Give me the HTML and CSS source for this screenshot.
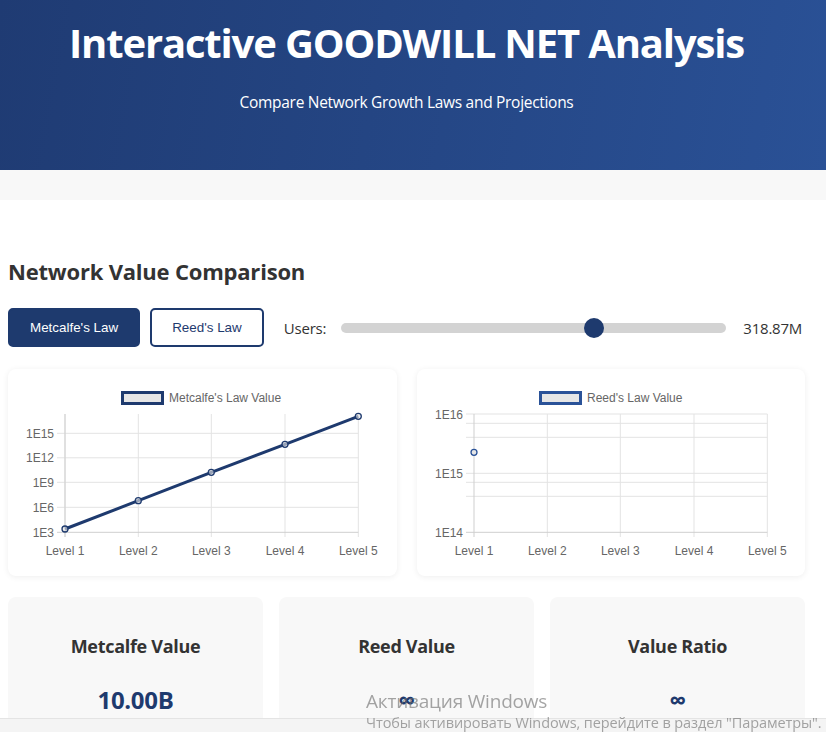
FILE: index.html
```html
<!DOCTYPE html>
<html lang="en">
<head>
<meta charset="utf-8">
<title>Interactive GOODWILL NET Analysis</title>
<link rel="stylesheet" href="styles.css">
</head>
<body>
<header class="hero">
  <div class="hero-inner">
    <h1 class="hero-title">Interactive GOODWILL NET Analysis</h1>
    <p class="hero-sub">Compare Network Growth Laws and Projections</p>
  </div>
</header>
<div class="strip"></div>
<main class="content">
  <h2 class="section-title">Network Value Comparison</h2>
  <div class="controls">
    <button class="btn btn-active">Metcalfe's Law</button>
    <button class="btn btn-outline">Reed's Law</button>
    <label class="users-label" for="users">Users:</label>
    <input class="slider" id="users" type="range" min="0" max="1000" value="666">
    <span class="users-value">318.87M</span>
  </div>

  <div class="charts">
    <div class="chart-card">
      <svg class="chart" width="389" height="207" viewBox="0 0 389 207">
        <rect x="114.5" y="23.5" width="40" height="11" fill="#e6e6e6" stroke="#1e3a6e" stroke-width="3"/>
        <text x="161" y="33" class="legend-text">Metcalfe's Law Value</text>
        <g stroke="#e3e3e3" stroke-width="1">
          <line x1="57" y1="45" x2="57" y2="168"/>
          <line x1="130.3" y1="45" x2="130.3" y2="168"/>
          <line x1="203.3" y1="45" x2="203.3" y2="168"/>
          <line x1="277" y1="45" x2="277" y2="168"/>
          <line x1="350.3" y1="45" x2="350.3" y2="168"/>
          <line x1="49" y1="64.3" x2="350.3" y2="64.3"/>
          <line x1="49" y1="88.8" x2="350.3" y2="88.8"/>
          <line x1="49" y1="113.3" x2="350.3" y2="113.3"/>
          <line x1="49" y1="138.3" x2="350.3" y2="138.3"/>
        </g>
        <line x1="49" y1="163.3" x2="350.3" y2="163.3" stroke="#cfcfcf"/>
        <line x1="57" y1="45" x2="57" y2="168" stroke="#cfcfcf"/>
        <g class="tick-text" text-anchor="end">
          <text x="46" y="68.5">1E15</text>
          <text x="46" y="93">1E12</text>
          <text x="46" y="117.5">1E9</text>
          <text x="46" y="142.5">1E6</text>
          <text x="46" y="167.5">1E3</text>
        </g>
        <g class="tick-text" text-anchor="middle">
          <text x="57" y="185.5">Level 1</text>
          <text x="130.3" y="185.5">Level 2</text>
          <text x="203.3" y="185.5">Level 3</text>
          <text x="277" y="185.5">Level 4</text>
          <text x="350.3" y="185.5">Level 5</text>
        </g>
        <polyline points="57,160 130.3,131.7 203.3,103.3 277,75.3 350.3,47.3" fill="none" stroke="#1e3a6e" stroke-width="3" stroke-linejoin="round"/>
        <g fill="#e6e6e6" fill-opacity="0.6" stroke="#1e3a6e" stroke-width="1.3">
          <circle cx="57" cy="160" r="3"/>
          <circle cx="130.3" cy="131.7" r="3"/>
          <circle cx="203.3" cy="103.3" r="3"/>
          <circle cx="277" cy="75.3" r="3"/>
          <circle cx="350.3" cy="47.3" r="3"/>
        </g>
      </svg>
    </div>
    <div class="chart-card">
      <svg class="chart" width="388" height="207" viewBox="0 0 388 207">
        <rect x="123.5" y="23.5" width="40" height="11" fill="#e6e6e6" stroke="#2a5298" stroke-width="3"/>
        <text x="170" y="33" class="legend-text">Reed's Law Value</text>
        <g stroke="#e3e3e3" stroke-width="1">
          <line x1="130.3" y1="45" x2="130.3" y2="168"/>
          <line x1="203.3" y1="45" x2="203.3" y2="168"/>
          <line x1="277" y1="45" x2="277" y2="168"/>
          <line x1="350.3" y1="45" x2="350.3" y2="168"/>
          <line x1="49" y1="45" x2="350.3" y2="45"/>
          <line x1="49" y1="54.3" x2="350.3" y2="54.3"/>
          <line x1="49" y1="68.3" x2="350.3" y2="68.3"/>
          <line x1="49" y1="104.3" x2="350.3" y2="104.3"/>
          <line x1="49" y1="113.3" x2="350.3" y2="113.3"/>
          <line x1="49" y1="127.3" x2="350.3" y2="127.3"/>
        </g>
        <line x1="49" y1="163.3" x2="350.3" y2="163.3" stroke="#cfcfcf"/>
        <line x1="57" y1="45" x2="57" y2="168" stroke="#cfcfcf"/>
        <g class="tick-text" text-anchor="end">
          <text x="46" y="49.5">1E16</text>
          <text x="46" y="108.5">1E15</text>
          <text x="46" y="167.5">1E14</text>
        </g>
        <g class="tick-text" text-anchor="middle">
          <text x="57" y="185.5">Level 1</text>
          <text x="130.3" y="185.5">Level 2</text>
          <text x="203.3" y="185.5">Level 3</text>
          <text x="277" y="185.5">Level 4</text>
          <text x="350.3" y="185.5">Level 5</text>
        </g>
        <circle cx="57" cy="83.3" r="3" fill="#e6e6e6" stroke="#2a5298" stroke-width="1.3"/>
      </svg>
    </div>
  </div>

  <div class="stats">
    <div class="stat-card">
      <h3 class="stat-label">Metcalfe Value</h3>
      <div class="stat-value">10.00B</div>
    </div>
    <div class="stat-card">
      <h3 class="stat-label">Reed Value</h3>
      <div class="stat-value">∞</div>
    </div>
    <div class="stat-card">
      <h3 class="stat-label">Value Ratio</h3>
      <div class="stat-value">∞</div>
    </div>
  </div>
</main>

<div class="hscroll"></div>
<div class="watermark">
  <div class="wm-title">Активация Windows</div>
  <div class="wm-text">Чтобы активировать Windows, перейдите в раздел "Параметры".</div>
</div>
</body>
</html>
```

FILE: styles.css
```css
* { box-sizing: border-box; }

html, body {
  margin: 0;
  padding: 0;
  background: #ffffff;
  overflow: hidden;
}

body {
  font-family: "Open Sans", "Noto Sans", sans-serif;
  color: #333333;
}

.hero {
  height: 170px;
  background: linear-gradient(100deg, #1f3b73 0%, #2a5196 100%);
  color: #ffffff;
}

.hero-inner {
  width: 813px;
  padding-top: 19px;
  text-align: center;
}

.hero-title {
  margin: 0;
  font-size: 40px;
  line-height: 48px;
  font-weight: 700;
  letter-spacing: -1.15px;
}

.hero-sub {
  margin: 23px 0 0;
  font-size: 15.5px;
  line-height: 24px;
  letter-spacing: -0.3px;
}

.strip {
  height: 30px;
  background: #f8f8f8;
}

.content {
  width: 813px;
  padding: 0 8px;
}

.section-title {
  margin: 56px 0 0;
  font-size: 22px;
  line-height: 30px;
  font-weight: 700;
  color: #333333;
  letter-spacing: -0.2px;
}

.controls {
  display: flex;
  align-items: center;
  margin-top: 22px;
  height: 39px;
}

.btn {
  flex: none;
  height: 39px;
  padding: 0 20px;
  border: 2px solid #1e3a6e;
  border-radius: 5px;
  font-family: "Liberation Sans", Arial, sans-serif;
  font-size: 13.4px;
  white-space: nowrap;
}

.btn-active {
  background: #1e3a6e;
  color: #ffffff;
}

.btn-outline {
  background: #ffffff;
  color: #1e3a6e;
  margin-left: 10px;
}

.users-label {
  flex: none;
  margin-left: 20px;
  font-size: 15px;
  color: #333333;
  letter-spacing: -0.2px;
}

.slider {
  flex: none;
  -webkit-appearance: none;
  appearance: none;
  width: 385px;
  height: 10px;
  margin: 0 0 0 15px;
  border-radius: 5px;
  background: #d3d3d3;
  outline: none;
}

.slider::-webkit-slider-thumb {
  -webkit-appearance: none;
  appearance: none;
  width: 20px;
  height: 20px;
  border-radius: 50%;
  background: #1e3a6e;
  border: none;
}

.users-value {
  flex: none;
  margin-left: 17px;
  font-size: 15px;
  color: #333333;
  letter-spacing: -0.2px;
}

.charts {
  display: grid;
  grid-template-columns: 389px 388px;
  gap: 20px;
  margin-top: 22px;
}

.chart-card {
  height: 207px;
  background: #ffffff;
  border-radius: 8px;
  box-shadow: 0 1px 6px rgba(0, 0, 0, 0.07);
}

.chart {
  display: block;
}

.legend-text,
.tick-text {
  font-family: "Liberation Sans", Arial, sans-serif;
  font-size: 12px;
  fill: #666666;
}

.stats {
  display: grid;
  grid-template-columns: repeat(3, 255px);
  gap: 16px;
  margin-top: 21px;
}

.stat-card {
  background: #f8f8f8;
  border-radius: 8px;
  padding: 36px 20px 30px;
  text-align: center;
}

.stat-label {
  margin: 0;
  font-size: 18px;
  line-height: 27px;
  font-weight: 700;
  color: #333333;
  letter-spacing: -0.3px;
}

.stat-value {
  margin-top: 22px;
  font-size: 24px;
  line-height: 36px;
  font-weight: 700;
  color: #1e3a6e;
  letter-spacing: -0.3px;
}

.hscroll {
  position: fixed;
  left: 0;
  right: 0;
  bottom: 0;
  height: 14px;
  background: #f4f4f4;
  border-top: 1px solid #e4e4e4;
}

.watermark {
  position: fixed;
  left: 366px;
  top: 689px;
  color: rgba(110, 110, 110, 0.62);
  pointer-events: none;
  white-space: nowrap;
}

.wm-title {
  font-size: 19px;
  line-height: 24px;
  letter-spacing: -0.2px;
}

.wm-text {
  font-size: 14.5px;
  line-height: 20px;
  letter-spacing: -0.1px;
}
```
